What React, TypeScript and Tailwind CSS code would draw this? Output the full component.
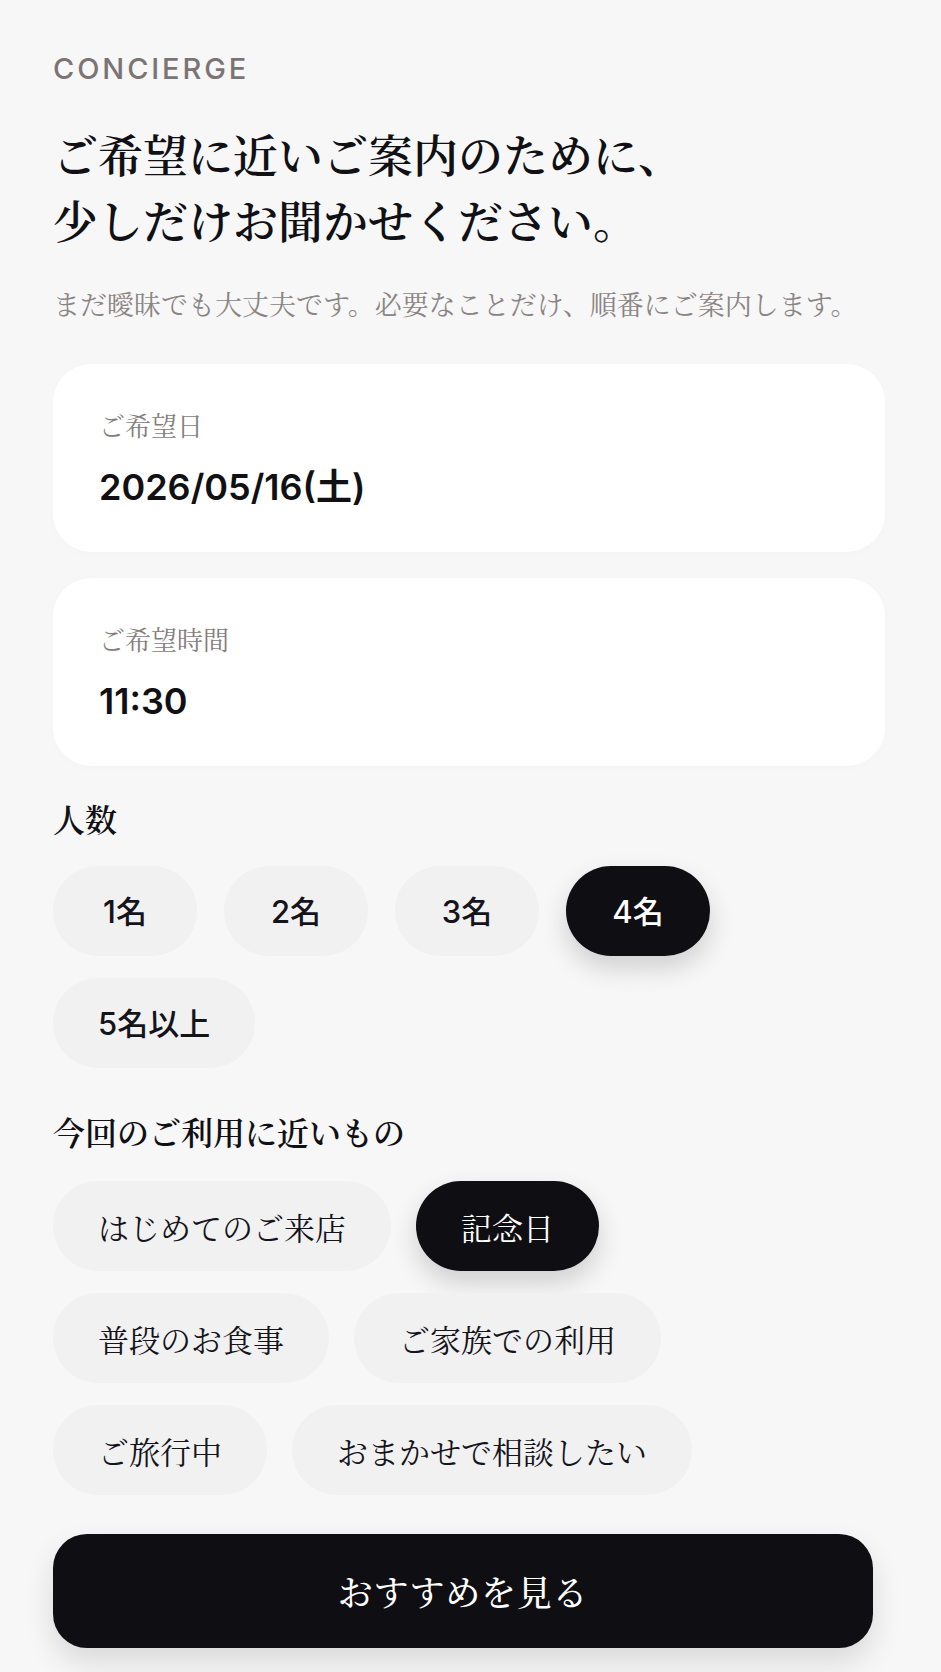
import { useState } from 'react'

const SERIF = "font-['Noto_Serif_CJK_JP','Noto_Serif_JP','Noto_Sans_CJK_JP',serif]"

const partySizes = ['1名', '2名', '3名', '4名', '5名以上']
const purposes = [
	'はじめてのご来店',
	'記念日',
	'普段のお食事',
	'ご家族での利用',
	'ご旅行中',
	'おまかせで相談したい',
]

function InfoCard({ label, value }: { label: string; value: string }) {
	return (
		<div className="flex w-[832px] flex-col gap-[22px] rounded-[38px] bg-white px-[46px] py-[43px] shadow-[0_2px_12px_rgba(0,0,0,0.015)]">
			<p className={`${SERIF} text-[26px] leading-[36px] text-[#847d7c]`}>{label}</p>
			<p className="font-['Inter','Noto_Sans_CJK_JP',sans-serif] text-[36px] font-semibold leading-[44px] text-[#111015]">
				{value}
			</p>
		</div>
	)
}

function Chip({
	label,
	active,
	serif,
	onClick,
}: {
	label: string
	active: boolean
	serif?: boolean
	onClick: () => void
}) {
	return (
		<button
			type="button"
			onClick={onClick}
			className={`flex h-[90px] items-center justify-center rounded-full text-[31px] leading-none ${
				serif
					? `${SERIF} px-[45px] font-normal`
					: "min-w-[144px] px-[45px] font-['Inter','Noto_Sans_CJK_JP',sans-serif] font-medium"
			} ${
				active
					? 'bg-[#0f0e13] text-white shadow-[0_12px_26px_rgba(0,0,0,0.16)]'
					: 'bg-[#f1f1f2] text-[#15141a]'
			}`}
		>
			{label}
		</button>
	)
}

export default function App() {
	const [party, setParty] = useState('4名')
	const [purpose, setPurpose] = useState('記念日')

	return (
		<div className="min-h-screen w-full bg-[#f7f7f8] pl-[53px] pt-[51px] pb-[22px]">
			<p className="font-['Inter',sans-serif] text-[29px] font-medium leading-[36px] tracking-[0.1em] text-[#7b7473]">
				CONCIERGE
			</p>

			<h1 className={`${SERIF} mt-[34px] text-[45px] font-semibold leading-[66px] text-[#111014]`}>
				ご希望に近いご案内のために、
				<br />
				少しだけお聞かせください。
			</h1>

			<p className={`${SERIF} mt-[31px] text-[27px] leading-[40px] text-[#8a8483]`}>
				まだ曖昧でも大丈夫です。必要なことだけ、順番にご案内します。
			</p>

			<div className="mt-[40px] flex flex-col gap-[26px]">
				<InfoCard label="ご希望日" value="2026/05/16(土)" />
				<InfoCard label="ご希望時間" value="11:30" />
			</div>

			<h2 className={`${SERIF} mt-[32px] text-[32px] font-semibold leading-[40px] text-[#111014]`}>人数</h2>
			<div className="mt-[28px] flex w-[832px] flex-wrap gap-x-[27px] gap-y-[22px]">
				{partySizes.map((p) => (
					<Chip key={p} label={p} active={party === p} onClick={() => setParty(p)} />
				))}
			</div>

			<h2 className={`${SERIF} mt-[43px] text-[32px] font-semibold leading-[40px] text-[#111014]`}>
				今回のご利用に近いもの
			</h2>
			<div className="mt-[30px] flex w-[720px] flex-wrap gap-x-[25px] gap-y-[22px]">
				{purposes.map((p) => (
					<Chip key={p} label={p} serif active={purpose === p} onClick={() => setPurpose(p)} />
				))}
			</div>

			<button
				type="button"
				className={`${SERIF} mt-[39px] flex h-[114px] w-[820px] items-center justify-center rounded-[34px] bg-[#0f0e13] text-[35px] font-medium tracking-[0.02em] text-white shadow-[0_14px_30px_rgba(0,0,0,0.12)]`}
			>
				おすすめを見る
			</button>
		</div>
	)
}
